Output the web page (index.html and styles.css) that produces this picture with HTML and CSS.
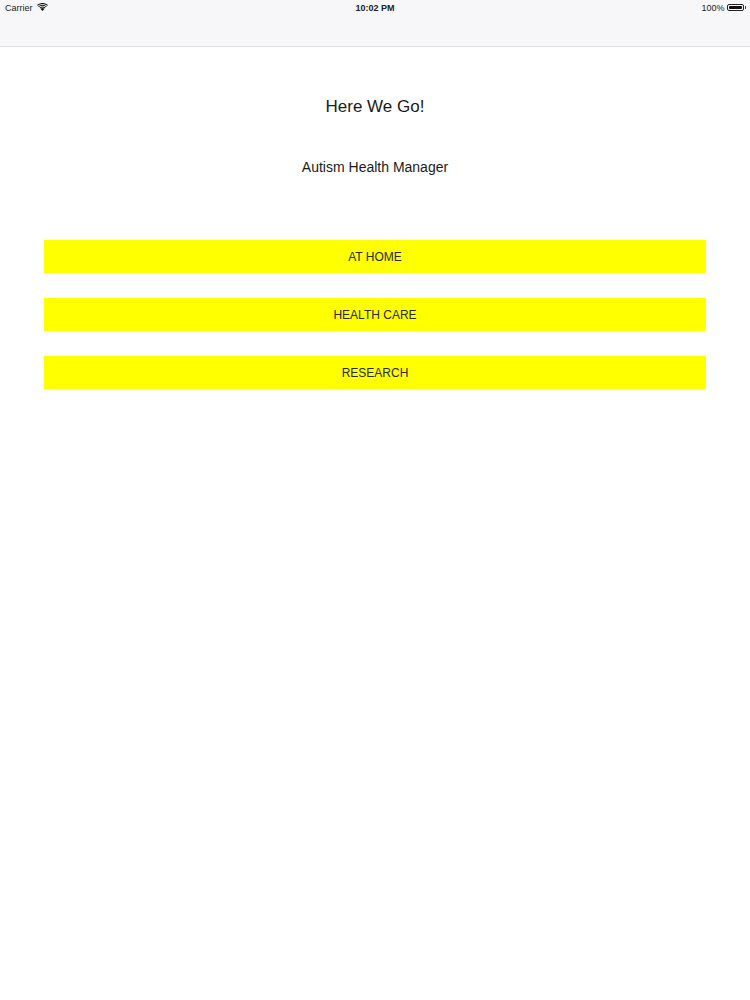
FILE: index.html
```html
<!DOCTYPE html>
<html>
<head>
<meta charset="utf-8">
<link rel="stylesheet" href="styles.css">
</head>
<body>
<header class="topbar">
  <div class="status">
    <div class="status-left">
      <span>Carrier</span>
      <svg class="wifi" width="11" height="8" viewBox="0 0 11 8">
        <path d="M5.5 8 L3.6 5.9 A2.8 2.8 0 0 1 7.4 5.9 Z" fill="#111"/>
        <path d="M2.5 4.8 A4.4 4.4 0 0 1 8.5 4.8 L7.8 5.5 A3.4 3.4 0 0 0 3.2 5.5 Z" fill="#111"/>
        <path d="M1.2 3.4 A6.3 6.3 0 0 1 9.8 3.4 L9.1 4.1 A5.3 5.3 0 0 0 1.9 4.1 Z" fill="#111"/>
        <path d="M0 2.1 A8.1 8.1 0 0 1 11 2.1 L10.3 2.8 A7.1 7.1 0 0 0 0.7 2.8 Z" fill="#111"/>
      </svg>
    </div>
    <div class="status-time">10:02 PM</div>
    <div class="status-right">
      <span>100%</span>
      <span class="battery"><span class="battery-fill"></span></span>
      <span class="battery-tip"></span>
    </div>
  </div>
</header>
<main class="content">
  <h1 class="title">Here We Go!</h1>
  <p class="subtitle">Autism Health Manager</p>
  <div class="buttons">
    <button class="btn">AT HOME</button>
    <button class="btn">HEALTH CARE</button>
    <button class="btn">RESEARCH</button>
  </div>
</main>
</body>
</html>
```

FILE: styles.css
```css
* { box-sizing: border-box; }
html, body {
  margin: 0;
  padding: 0;
  background: #ffffff;
  font-family: "Liberation Sans", Arial, sans-serif;
  color: #1a1a1a;
}
.topbar {
  height: 47px;
  background: #f7f6f8;
  border-bottom: 1px solid #dcdcdf;
}
.status {
  height: 15px;
  display: flex;
  align-items: center;
  justify-content: space-between;
  padding: 0 4px 0 5px;
  font-size: 9px;
  color: #222;
  position: relative;
}
.status-left {
  display: flex;
  align-items: center;
  gap: 4px;
}
.wifi { display: block; margin-top: -1px; }
.status-time {
  position: absolute;
  left: 0;
  right: 0;
  text-align: center;
  font-weight: bold;
  pointer-events: none;
}
.status-right {
  display: flex;
  align-items: center;
  gap: 2px;
}
.battery {
  width: 17px;
  height: 7px;
  border: 1px solid #222;
  border-radius: 2px;
  padding: 1px;
  display: flex;
}
.battery-fill {
  flex: 1;
  background: #111;
  border-radius: 1px;
}
.battery-tip {
  width: 1.5px;
  height: 3px;
  background: #444;
  margin-left: -1px;
}
.content {
  padding: 49px 44px 0 44px;
  display: flex;
  flex-direction: column;
  align-items: stretch;
}
.title {
  margin: 0;
  font-size: 17px;
  font-weight: normal;
  text-align: center;
  line-height: 22px;
  color: #1a1a1a;
}
.subtitle {
  margin: 38px 0 0 0;
  font-size: 14px;
  text-align: center;
  line-height: 22px;
  color: #1a1a1a;
}
.buttons {
  margin-top: 62px;
  display: flex;
  flex-direction: column;
  gap: 25px;
}
.btn {
  height: 33px;
  border: none;
  margin: 0;
  padding: 0;
  background: #ffff00;
  font-family: "Liberation Sans", Arial, sans-serif;
  font-size: 12px;
  color: #2a2a3a;
  text-align: center;
}
```
